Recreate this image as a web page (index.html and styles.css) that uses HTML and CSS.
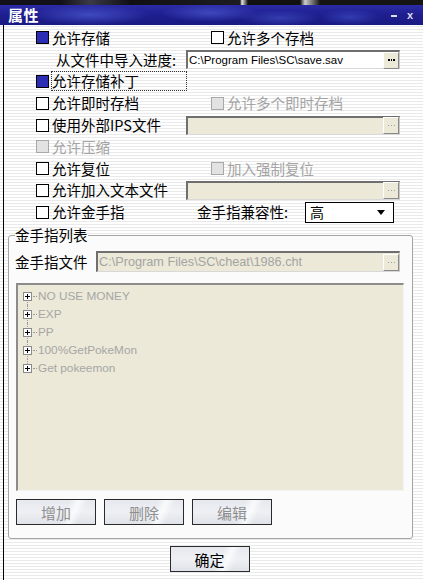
FILE: index.html
```html
<!DOCTYPE html>
<html lang="zh-CN">
<head>
<meta charset="utf-8">
<title>属性</title>
<link rel="stylesheet" href="styles.css">
</head>
<body>
<div class="window">
  <div class="topstrip"></div>
  <div class="titlebar">
    <span class="title">属性</span>
    <span class="ctrls"><span class="ctl-min"></span><span class="ctl-x">x</span></span>
  </div>
  <div class="client">
    <div class="options">
      <div class="cell"><span class="cb on"></span><span class="lbl">允许存储</span></div>
      <div class="cell c2"><span class="cb"></span><span class="lbl">允许多个存档</span></div>

      <div class="cell indent"><span class="lbl">从文件中导入进度:</span></div>
      <div class="cell"><div class="field"><span class="ftext">C:\Program Files\SC\save.sav</span><span class="browse"><span class="ell"></span></span></div></div>

      <div class="cell"><span class="cb on"></span><span class="lbl focus">允许存储补丁</span></div>
      <div class="cell"></div>

      <div class="cell"><span class="cb"></span><span class="lbl">允许即时存档</span></div>
      <div class="cell c2"><span class="cb dis"></span><span class="lbl gray">允许多个即时存档</span></div>

      <div class="cell"><span class="cb"></span><span class="lbl">使用外部IPS文件</span></div>
      <div class="cell"><div class="field dis"><span class="ftext"></span><span class="browse dis"><span class="ell"></span></span></div></div>

      <div class="cell"><span class="cb dis"></span><span class="lbl gray">允许压缩</span></div>
      <div class="cell"></div>

      <div class="cell"><span class="cb"></span><span class="lbl">允许复位</span></div>
      <div class="cell c2"><span class="cb dis"></span><span class="lbl gray">加入强制复位</span></div>

      <div class="cell"><span class="cb"></span><span class="lbl">允许加入文本文件</span></div>
      <div class="cell"><div class="field dis"><span class="ftext"></span><span class="browse dis"><span class="ell"></span></span></div></div>

      <div class="cell"><span class="cb"></span><span class="lbl">允许金手指</span></div>
      <div class="cell c3"><span class="lbl">金手指兼容性:</span><span class="select"><span class="sval">高</span><span class="arrow"></span></span></div>
    </div>

    <fieldset class="group">
      <legend>金手指列表</legend>
      <div class="filerow">
        <span class="lbl">金手指文件</span>
        <div class="field dis wide"><span class="ftext gray">C:\Program Files\SC\cheat\1986.cht</span><span class="browse dis"><span class="ell"></span></span></div>
      </div>
      <div class="tree">
        <ul>
          <li><span class="exp"></span><span class="dots"></span><span class="item">NO USE MONEY</span></li>
          <li><span class="exp"></span><span class="dots"></span><span class="item">EXP</span></li>
          <li><span class="exp"></span><span class="dots"></span><span class="item">PP</span></li>
          <li><span class="exp"></span><span class="dots"></span><span class="item">100%GetPokeMon</span></li>
          <li><span class="exp"></span><span class="dots"></span><span class="item">Get pokeemon</span></li>
        </ul>
      </div>
      <div class="btnrow">
        <button class="btn dis">增加</button>
        <button class="btn dis">删除</button>
        <button class="btn dis">编辑</button>
      </div>
    </fieldset>

    <div class="footer">
      <button class="btn">确定</button>
    </div>
  </div>
</div>
</body>
</html>
```
FILE: styles.css
```css
html, body {
  margin: 0;
  padding: 0;
}
body {
  width: 423px;
  height: 580px;
  overflow: hidden;
  font-family: "Noto Sans CJK SC", "Liberation Sans", sans-serif;
  background: #fff;
}
.window {
  width: 423px;
  height: 580px;
  display: flex;
  flex-direction: column;
  background: repeating-linear-gradient(to bottom, #ffffff 0, #ffffff 2px, #e9e9e9 2px, #e9e9e9 3px);
}
.topstrip {
  height: 5px;
  background: linear-gradient(to right, #121018 0, #121018 60px, #3a3a48 90px, #101014 130px, #1c1c22 240px, #e8e8e8 242px, #111 248px, #111 300px, #cfcfcf 305px, #151515 320px);
}
.titlebar {
  height: 20px;
  display: flex;
  align-items: center;
  justify-content: space-between;
  padding: 0 8px 0 8px;
  background:
    radial-gradient(ellipse 60px 10px at 90px 10px, rgba(90,110,230,0.55), transparent),
    radial-gradient(ellipse 50px 9px at 210px 8px, rgba(90,110,230,0.5), transparent),
    radial-gradient(ellipse 40px 8px at 280px 13px, rgba(80,100,220,0.45), transparent),
    radial-gradient(ellipse 30px 8px at 350px 12px, rgba(70,90,210,0.5), transparent),
    linear-gradient(to bottom, #2b2ba6 0, #1e1e8e 50%, #1a1a84 100%);
  color: #fff;
}
.title {
  font-weight: bold;
  font-size: 15px;
  line-height: 20px;
  letter-spacing: 0.5px;
}
.ctrls {
  display: flex;
  align-items: center;
  gap: 10px;
  padding-right: 2px;
}
.ctl-min {
  width: 6px;
  height: 2px;
  background: #dde;
  margin-top: 1px;
}
.ctl-x {
  font-family: "Liberation Sans", sans-serif;
  font-weight: bold;
  font-size: 11px;
  color: #dde;
  line-height: 12px;
}
.client {
  flex: 1;
  margin-left: 3px;
  border-left: 1px solid #000;
  display: flex;
  flex-direction: column;
}
.options {
  display: grid;
  grid-template-columns: 150px 214px;
  grid-auto-rows: 21.8px;
  padding: 2px 0 0 32px;
  font-size: 14.5px;
}
.cell {
  display: flex;
  align-items: center;
  white-space: nowrap;
}
.cell.c2 { padding-left: 25px; }
.cell.c3 { padding-left: 11px; justify-content: flex-start; }
.cell.indent { padding-left: 20px; }
.lbl {
  line-height: 18px;
  color: #000;
}
.gray { color: #a4a4a4; }
.cb {
  width: 11px;
  height: 11px;
  border: 1px solid #000;
  background: #fff;
  margin-right: 3px;
  flex: none;
}
.cb.on { background: #2c2cb4; }
.cb.dis { background: #e2e2e2; border-color: #a8a8a8; }
.lbl.focus {
  flex: 1;
  outline: 1px dotted #333;
  outline-offset: 0;
  height: 18px;
}
.field {
  width: 214px;
  height: 19px;
  box-sizing: border-box;
  border-top: 2px solid #6f6f6f;
  border-left: 2px solid #6f6f6f;
  border-right: 1px solid #c8c8c8;
  border-bottom: 1px solid #d8d8d8;
  background: #fff;
  display: flex;
  align-items: center;
}
.field.dis { background: #ece9d8; }
.field.wide { width: 304px; height: 21px; }
.ftext {
  flex: 1;
  font-family: "Liberation Sans", sans-serif;
  font-size: 11.5px;
  padding-left: 1px;
  color: #000;
  overflow: hidden;
  white-space: nowrap;
}
.ftext.gray { color: #a4a4a4; font-size: 12.7px; }
.browse {
  width: 14px;
  height: 15px;
  margin-right: 0;
  background: #ece9d8;
  border-top: 1px solid #fff;
  border-left: 1px solid #fff;
  border-right: 1px solid #8a8a8a;
  border-bottom: 1px solid #8a8a8a;
  display: flex;
  align-items: center;
  justify-content: center;
  flex: none;
}
.ell {
  width: 7px;
  height: 2px;
  background: repeating-linear-gradient(to right, #000 0, #000 1.5px, transparent 1.5px, transparent 2.5px);
}
.browse.dis .ell {
  height: 1px;
  background: repeating-linear-gradient(to right, #a0a0a0 0, #a0a0a0 1px, transparent 1px, transparent 3px);
}
.select {
  margin-left: 17px;
  width: 89px;
  height: 21px;
  box-sizing: border-box;
  border: 1px solid #000;
  background: #fff;
  display: flex;
  align-items: center;
  justify-content: space-between;
  padding: 0 8px 0 4px;
}
.sval { font-size: 14px; line-height: 18px; }
.arrow {
  width: 0;
  height: 0;
  border-left: 4px solid transparent;
  border-right: 4px solid transparent;
  border-top: 5px solid #000;
}
.group {
  margin: 2px 10px 0 4px;
  padding: 6px 8px 13px 6px;
  border: 1px solid #a4a4a4;
  border-radius: 3px;
  background: #fbfbfb;
  min-width: 0;
}
.group legend {
  padding: 0;
  font-size: 14.5px;
  line-height: 20px;
}
.filerow {
  display: flex;
  align-items: center;
  gap: 8px;
  height: 21px;
  font-size: 14.5px;
}
.filerow .lbl { width: 73px; white-space: nowrap; }
.tree {
  margin: 11px 0 0 1px;
  height: 208px;
  box-sizing: border-box;
  background: #ece9d8;
  border-top: 2px solid #8c8c8c;
  border-left: 2px solid #8c8c8c;
  border-right: 1px solid #f4f4f4;
  border-bottom: 1px solid #f4f4f4;
}
.tree ul {
  list-style: none;
  margin: 0;
  padding: 2px 0 0 5px;
}
.tree li {
  position: relative;
  height: 18px;
  display: flex;
  align-items: center;
}
.tree li::before {
  content: "";
  position: absolute;
  left: 4px;
  top: 0;
  bottom: 0;
  border-left: 1px dotted #9a9a9a;
}
.tree li:first-child::before { top: 9px; }
.tree li:last-child::before { bottom: 9px; }
.exp {
  position: relative;
  z-index: 1;
  width: 7px;
  height: 7px;
  border: 1px solid #8a8a8a;
  background:
    linear-gradient(#000, #000) center / 5px 1px no-repeat,
    linear-gradient(#000, #000) center / 1px 5px no-repeat,
    #fff;
  flex: none;
}
.dots {
  width: 4px;
  margin: 0 1px 0 1px;
  border-top: 1px dotted #9a9a9a;
}
.item {
  font-family: "Liberation Sans", sans-serif;
  font-size: 11.8px;
  color: #a6a6a6;
  line-height: 18px;
}
.btnrow {
  display: flex;
  gap: 8px;
  margin: 8px 0 0 1px;
}
.btn {
  width: 80px;
  height: 26px;
  box-sizing: border-box;
  border: 1px solid #2a2a2a;
  padding: 0;
  font-family: "Noto Sans CJK SC", sans-serif;
  font-size: 15px;
  color: #000;
  background:
    linear-gradient(115deg, transparent 0 60%, rgba(255,255,255,0.75) 70%, transparent 80%),
    linear-gradient(to bottom, #e6e8ee 0, #eef0f4 50%, #dfe2e8 100%);
}
.btn.dis { color: #8e8e8e; }
.footer {
  display: flex;
  justify-content: center;
  padding: 7px 0 0 0;
  margin-left: -8px;
}
```
